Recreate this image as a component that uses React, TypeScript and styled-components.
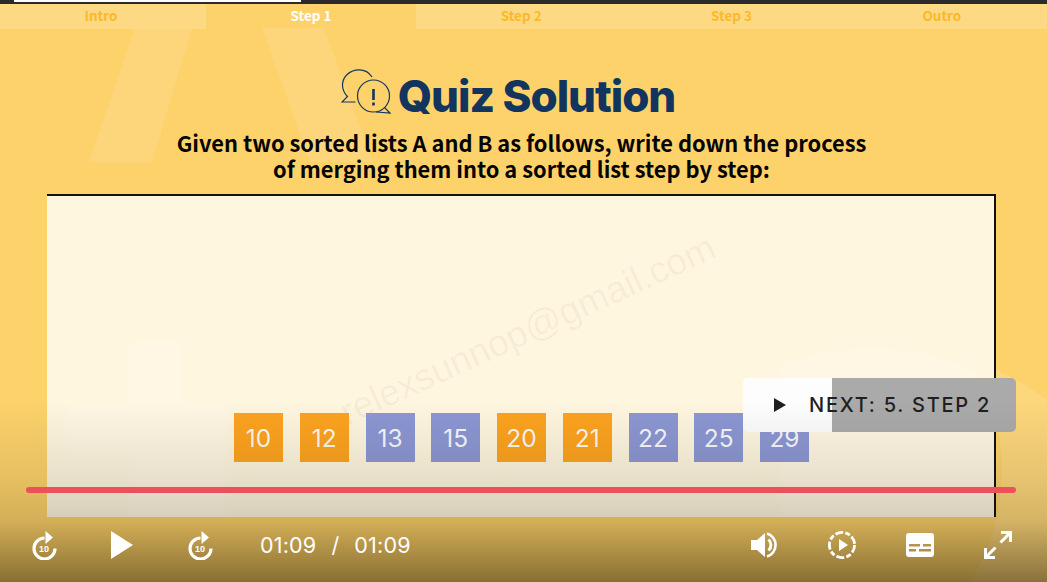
import styled, { createGlobalStyle } from 'styled-components';

const GlobalStyle = createGlobalStyle`
  html, body {
    margin: 0;
    padding: 0;
    background: #fdd26b;
  }
`;

const Stage = styled.div`
  position: relative;
  width: 1047px;
  height: 582px;
  overflow: hidden;
  background: #fdd26b;
  font-family: 'Noto Sans CJK SC', 'Noto Sans', sans-serif;
`;

const Backdrop = styled.svg`
  position: absolute;
  inset: 0;
`;

const LoadBar = styled.div`
  position: relative;
  height: 4px;
  background: #2b2b2b;
`;

const LoadFill = styled.div`
  position: absolute;
  left: 14px;
  top: 0;
  width: 287px;
  height: 2px;
  background: #fff;
`;

const Tabs = styled.div`
  position: relative;
  display: grid;
  grid-template-columns: 206px 210px repeat(3, 1fr);
  height: 25px;
`;

const Tab = styled.div<{ $active?: boolean }>`
  display: flex;
  align-items: center;
  justify-content: center;
  padding-bottom: 3px;
  box-sizing: border-box;
  font-size: 13.5px;
  font-weight: 700;
  color: ${(p) => (p.$active ? '#fff' : '#fdb827')};
  background: ${(p) => (p.$active ? 'transparent' : '#fdd983')};

  &:first-child {
    padding-right: 4px;
  }
`;

const Heading = styled.div`
  position: relative;
  display: flex;
  align-items: center;
  justify-content: center;
  gap: 7px;
  margin-top: 37px;
  padding-right: 31px;
  height: 60px;
`;

const ChatSvg = styled.svg`
  margin-bottom: 9px;
`;

const Title = styled.h1`
  margin: 0;
  font-family: Inter, sans-serif;
  font-size: 44px;
  font-weight: 800;
  line-height: 60px;
  letter-spacing: -1.05px;
  color: #12355f;
`;

const Prompt = styled.p`
  position: relative;
  margin: 4px 0 0;
  padding-right: 4px;
  text-align: center;
  font-size: 21.85px;
  font-weight: 700;
  line-height: 26px;
  color: #050505;
`;

const Board = styled.div`
  position: relative;
  display: flex;
  align-items: flex-end;
  justify-content: center;
  gap: 16.75px;
  box-sizing: border-box;
  width: 949px;
  height: 323px;
  margin: 12px 0 0 47px;
  padding: 0 0 55px 2px;
  background: #fff6e0;
  border-top: 2px solid #111;
  border-right: 2px solid #111;
  overflow: hidden;
`;

const BoardShade = styled.svg`
  position: absolute;
  left: 0;
  top: 0;
`;

const Watermark = styled.div`
  position: absolute;
  left: 277px;
  top: 113px;
  font-family: 'Liberation Sans', Arial, sans-serif;
  font-size: 37px;
  color: rgba(120, 100, 60, 0.06);
  transform: rotate(-24.5deg);
  white-space: nowrap;
`;

const Tile = styled.div<{ $tone: 'orange' | 'blue' }>`
  position: relative;
  display: flex;
  align-items: center;
  justify-content: center;
  width: 49px;
  height: 49px;
  font-family: Inter, sans-serif;
  font-size: 24.5px;
  font-weight: 400;
  color: rgba(255, 255, 255, 0.95);
  background: ${(p) => (p.$tone === 'orange' ? '#fda31f' : '#8b97d4')};
`;

const NextButton = styled.div`
  position: absolute;
  left: 743px;
  top: 378px;
  display: flex;
  align-items: center;
  gap: 22px;
  box-sizing: border-box;
  width: 273px;
  height: 54px;
  padding-left: 30px;
  border-radius: 5px;
  background: linear-gradient(90deg, #fdfdfd 89px, #aaaaaa 89px);
  font-family: Inter, sans-serif;
  font-size: 20px;
  font-weight: 500;
  letter-spacing: 1.75px;
  color: #1f1f1f;
  white-space: nowrap;
`;

const Shade = styled.div`
  position: absolute;
  left: 0;
  right: 0;
  top: 400px;
  bottom: 0;
  pointer-events: none;
  background: linear-gradient(
    180deg,
    rgba(30, 20, 0, 0) 0,
    rgba(30, 20, 0, 0.1) 80px,
    rgba(30, 20, 0, 0.18) 120px,
    rgba(30, 20, 0, 0.52) 182px
  );
`;

const Timeline = styled.div`
  position: absolute;
  left: 26px;
  top: 487px;
  width: 990px;
  height: 6px;
  border-radius: 3px;
  background: #ef4f5a;
`;

const Controls = styled.div`
  position: absolute;
  left: 30px;
  right: 35px;
  top: 530px;
  height: 30px;
  display: flex;
  align-items: center;
  color: #fff;
`;

const IconSlot = styled.div<{ $gap?: number }>`
  display: flex;
  align-items: center;
  justify-content: center;
  width: 28px;
  height: 30px;
  margin-right: ${(p) => p.$gap ?? 0}px;
`;

const Time = styled.div`
  display: flex;
  gap: 15px;
  margin-left: 46px;
  font-family: Inter, sans-serif;
  font-size: 21.5px;
  font-weight: 400;
  letter-spacing: 0.2px;
`;

const Spacer = styled.div`
  flex: 1;
`;

const TileValues: { n: number; tone: 'orange' | 'blue' }[] = [
  { n: 10, tone: 'orange' },
  { n: 12, tone: 'orange' },
  { n: 13, tone: 'blue' },
  { n: 15, tone: 'blue' },
  { n: 20, tone: 'orange' },
  { n: 21, tone: 'orange' },
  { n: 22, tone: 'blue' },
  { n: 25, tone: 'blue' },
  { n: 29, tone: 'blue' },
];

const ChatIcon = () => (
  <ChatSvg width="50" height="46" viewBox="0 0 50 46" fill="none" stroke="#12355f" strokeWidth="1.2">
    <path d="M31 8C28 3 23 .8 18 .8C9 .8 1.5 7.5 1.5 16C1.5 21 4 25 6.5 27.5L1 33L14.5 33" />
    <circle cx="32.5" cy="27" r="16" />
    <path d="M43.5 38.5L49 44L35 43" />
    <path d="M32.5 20V31M32.5 33.5V36.5" strokeWidth="2.6" />
  </ChatSvg>
);

const SkipIcon = () => (
  <svg width="28" height="30" viewBox="0 0 28 30">
    <path d="M14.5 8A10.5 10.5 0 1 0 25 18.5" fill="none" stroke="#fff" strokeWidth="3.2" />
    <path d="M15.5 1L23 7.5L15.5 14Z" fill="#fff" />
    <text x="14" y="22" textAnchor="middle" fontFamily="'Liberation Sans', sans-serif" fontSize="9" fontWeight="700" fill="#fff">
      10
    </text>
  </svg>
);

const PlayIcon = () => (
  <svg width="24" height="30" viewBox="0 0 24 30">
    <path d="M1 1L23 15L1 29Z" fill="#fff" />
  </svg>
);

const VolumeIcon = () => (
  <svg width="28" height="26" viewBox="0 0 28 26">
    <path d="M1 8H7L15 1V25L7 18H1Z" fill="#fff" />
    <path d="M18.5 7.5A7.5 7.5 0 0 1 18.5 18.5" fill="none" stroke="#fff" strokeWidth="3" />
    <path d="M17 1.5A12 12 0 0 1 17 24.5" fill="none" stroke="#fff" strokeWidth="2.6" />
  </svg>
);

const SpeedIcon = () => (
  <svg width="28" height="28" viewBox="0 0 28 28">
    <circle cx="14" cy="14" r="12.6" fill="none" stroke="#fff" strokeWidth="2.8" strokeDasharray="8 2.2 5 2.2" />
    <path d="M11 8L20 14L11 20Z" fill="#fff" />
  </svg>
);

const CaptionIcon = () => (
  <svg width="28" height="24" viewBox="0 0 28 24">
    <path
      fillRule="evenodd"
      fill="#fff"
      d="M3 0H25A3 3 0 0 1 28 3V21A3 3 0 0 1 25 24H3A3 3 0 0 1 0 21V3A3 3 0 0 1 3 0ZM3 11V13.5H14V11ZM17 11V13.5H25V11ZM3 16V18.5H10V16ZM13 16V18.5H25V16Z"
    />
  </svg>
);

const ExpandIcon = () => (
  <svg width="28" height="28" viewBox="0 0 28 28" fill="none" stroke="#fff" strokeWidth="3">
    <path d="M17 1.5H26.5V11M26 2L16.5 11.5" />
    <path d="M1.5 17V26.5H11M2 26L11.5 16.5" />
  </svg>
);

export default function App() {
  return (
    <Stage>
      <GlobalStyle />
      <Backdrop width="1047" height="582" viewBox="0 0 1047 582">
        <path d="M135 28H192L152 162H89Z" fill="#fdd67b" />
        <path d="M262 28H324L373 162H310Z" fill="#fdd67b" />
        <path d="M780 335C860 335 960 335 1047 400V582H780Z" fill="#fdd77c" />
        <circle cx="790" cy="470" r="212" fill="#fdd26b" />
      </Backdrop>
      <LoadBar>
        <LoadFill />
      </LoadBar>
      <Tabs>
        <Tab>Intro</Tab>
        <Tab $active>Step 1</Tab>
        <Tab>Step 2</Tab>
        <Tab>Step 3</Tab>
        <Tab>Outro</Tab>
      </Tabs>
      <Heading>
        <ChatIcon />
        <Title>Quiz Solution</Title>
      </Heading>
      <Prompt>
        Given two sorted lists A and B as follows, write down the process
        <br />
        of merging them into a sorted list step by step:
      </Prompt>
      <Board>
        <BoardShade width="947" height="321" viewBox="0 0 947 321">
          <path d="M83 145H133V208H180V321H83V255H19V208H83Z" fill="#fff7e3" />
          <path d="M733 170C800 140 900 150 947 190V321H733Z" fill="#fff7e3" />
        </BoardShade>
        <Watermark>relexsunnop@gmail.com</Watermark>
        {TileValues.map((tile) => (
          <Tile key={tile.n} $tone={tile.tone}>
            {tile.n}
          </Tile>
        ))}
      </Board>
      <NextButton>
        <svg width="14" height="14" viewBox="0 0 14 14">
          <path d="M1 0L13 7L1 14Z" fill="#1f1f1f" />
        </svg>
        NEXT: 5. STEP 2
      </NextButton>
      <Shade />
      <Timeline />
      <Controls>
        <IconSlot $gap={50}>
          <SkipIcon />
        </IconSlot>
        <IconSlot $gap={50}>
          <PlayIcon />
        </IconSlot>
        <IconSlot>
          <SkipIcon />
        </IconSlot>
        <Time>
          <span>01:09</span>
          <span>/</span>
          <span>01:09</span>
        </Time>
        <Spacer />
        <IconSlot $gap={50}>
          <VolumeIcon />
        </IconSlot>
        <IconSlot $gap={50}>
          <SpeedIcon />
        </IconSlot>
        <IconSlot $gap={50}>
          <CaptionIcon />
        </IconSlot>
        <IconSlot>
          <ExpandIcon />
        </IconSlot>
      </Controls>
    </Stage>
  );
}
